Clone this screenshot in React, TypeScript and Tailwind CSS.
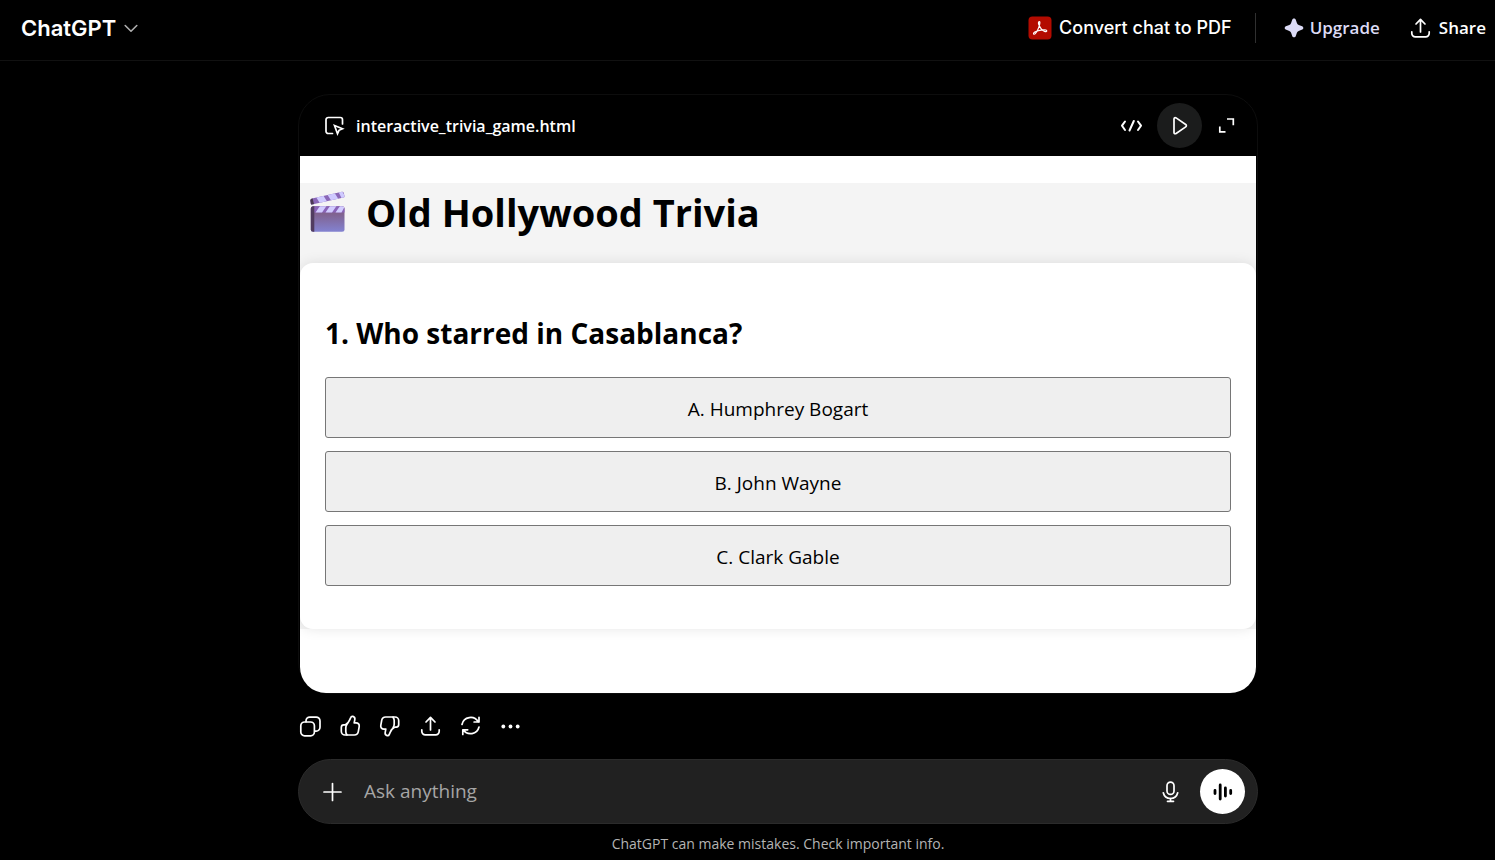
import React, { useState } from 'react';

const options = ['A. Humphrey Bogart', 'B. John Wayne', 'C. Clark Gable'];

interface IconProps {
  className?: string;
  children: React.ReactNode;
}

const Icon: React.FC<IconProps> = ({ className = 'size-6', children }) => (
  <svg
    viewBox="0 0 24 24"
    fill="none"
    stroke="currentColor"
    strokeWidth="1.7"
    strokeLinecap="round"
    strokeLinejoin="round"
    aria-hidden="true"
    className={`shrink-0 ${className}`}
  >
    {children}
  </svg>
);

const UploadIcon = () => (
  <Icon>
    <path d="M12.500 16V3.800M8 8l4.500-4.600L17 8" />
    <path d="M3.800 15.800v1.500a3.500 3.500 0 0 0 3.500 3.500h10.400a3.500 3.500 0 0 0 3.500-3.500v-1.500" />
  </Icon>
);

const ThumbIcon = ({ className }: { className?: string }) => (
  <Icon className={className}>
    <path d="M7.400 10.800c1.900-.9 3.400-2.700 4.300-4.900l1-2.300c.4-1 1.300-1.500 2.200-1.200 1.500.5 2.200 1.800 1.900 3.300l-.6 3.100h1.800c2.200 0 3.600 1.700 3.200 3.800l-.9 5c-.4 2.200-1.900 3.400-4 3.400H7a3.700 3.700 0 0 1-3.700-3.700v-3.900c0-1.500 1-2.600 2.400-2.600z" />
    <path d="M8.900 10.400c-.8 1-1.100 2.100-1.100 3.500v3.500c0 1.400.4 2.500 1.200 3.500" />
  </Icon>
);

const ClapperIcon = () => (
  <svg viewBox="0 0 36 41" className="h-[41px] w-9 shrink-0" role="img" aria-label="Clapper board">
    <defs>
      <linearGradient id="board" x1="0" y1="0" x2="0" y2="1">
        <stop offset="0.300" stopColor="#80628f" />
        <stop offset="1" stopColor="#8383d2" />
      </linearGradient>
      <clipPath id="arm">
        <path d="M2 7.500 32 .8a1.500 1.500 0 0 1 1.700 1l.8 3.300a1 1 0 0 1-.8 1.300L2 13.500a1 1 0 0 1-1.200-.8L.3 9.500a2 2 0 0 1 1.700-2z" />
      </clipPath>
      <clipPath id="slate">
        <rect x="0.800" y="15.200" width="33.700" height="25.500" rx="2.500" />
      </clipPath>
    </defs>
    <g clipPath="url(#arm)">
      <path fill="#8a67b7" d="M0 0h36v15H0z" />
      <path fill="#cfcaff" d="m6 6 7-2 5 8-7 2zM17 3l7-2 5 8-7 2zM28 0l4 0 4 7-4 1z" />
      <path fill="#4b3854" d="M0 7h2.500l2 8H0z" />
    </g>
    <g clipPath="url(#slate)">
      <path fill="url(#board)" d="M0 15h36v26H0z" />
      <path fill="#8a64b8" d="M4 15h32v6.500H4z" />
      <path fill="#d2ccff" d="M10 15h6.500l-4.500 6.500H5.500zM20 15h6.500L22 21.500h-6.500zM30 15h5l-3.500 6.500h-6z" />
      <path fill="#513c60" d="M0 15h4.300v26H0z" />
    </g>
  </svg>
);

const Header = () => (
  <header className="flex h-[61px] items-center justify-between border-b border-[#111] pr-[9px] pb-1 pl-[21px]">
    <button type="button" className="flex items-center gap-2 text-[22px] leading-7 font-semibold">
      ChatGPT
      <svg viewBox="0 0 14 14" fill="none" stroke="#afafaf" strokeWidth="1.600" strokeLinecap="round" strokeLinejoin="round" className="size-[14px]" aria-hidden="true">
        <path d="m1.200 4.500 5.800 5.700 5.800-5.700" />
      </svg>
    </button>

    <div className="flex items-center">
      <button type="button" className="flex items-center gap-[7px] text-lg font-medium">
        <svg viewBox="0 0 24 24" className="size-6" aria-hidden="true">
          <rect x="0.500" y="0.500" width="23" height="23" rx="4" fill="#b30b00" />
          <path
            d="M11.400 5.600c-1.300 0-1.100 1.800-.4 3.400 1.200 2.800 3.100 5.400 5.600 6.400 1.500.6 2.300 0 2.100-.7-.3-1-3-1.100-5.700-.6-2.300.4-4.900 1.100-6.200 1.900-1.300.9-1.600 1.900-1 2.200 1.100.5 2.900-2.200 4.100-4.700 1.500-3.100 2.600-7.900 1.500-7.900z"
            fill="none"
            stroke="#fff"
            strokeWidth="1.200"
          />
        </svg>
        Convert chat to PDF
      </button>
      <div className="mr-7 ml-[23px] h-[30px] w-px bg-[#303030]" />
      <button type="button" className="flex items-center gap-[6px] font-['Open_Sans',sans-serif] text-[17px] font-semibold text-[#dcdbf6]">
        <svg viewBox="0 0 20 20" fill="currentColor" className="size-5" aria-hidden="true">
          <path d="M8.300 1.600c.5-1.500 2.900-1.500 3.400 0l1.200 3.500c.3.900.9 1.500 1.800 1.800l3.500 1.300c1.500.5 1.500 2.900 0 3.400l-3.500 1.300c-.9.3-1.500.9-1.800 1.800l-1.200 3.500c-.5 1.500-2.900 1.500-3.400 0l-1.200-3.500c-.3-.9-.9-1.500-1.800-1.800l-3.500-1.300c-1.500-.5-1.500-2.900 0-3.400l3.500-1.300c.9-.3 1.500-.9 1.800-1.800z" />
        </svg>
        Upgrade
      </button>
      <button type="button" className="ml-7 flex items-center gap-[7px] font-['Open_Sans',sans-serif] text-[17px] font-semibold">
        <UploadIcon />
        Share
      </button>
    </div>
  </header>
);

const TriviaGame = () => {
  const [picked, setPicked] = useState<string | null>(null);

  return (
    <div className="overflow-hidden rounded-b-[26px] bg-white pt-[27px] pb-16 text-black">
      <div className="bg-[#f4f4f4]">
        <div className="flex h-20 items-start gap-5 pt-2 pl-[10px]">
          <ClapperIcon />
          <h1 className="text-[38px] leading-[42px] font-bold">Old Hollywood Trivia</h1>
        </div>
        <section className="rounded-[13px] bg-white px-[25px] pt-[50px] pb-[43px] shadow-[0_0_13px_rgba(0,0,0,0.1)]">
          <h2 className="text-[28px] leading-10 font-bold">1. Who starred in Casablanca?</h2>
          <div className="mt-6 flex flex-col gap-[13px]">
            {options.map((option) => (
              <button
                key={option}
                type="button"
                aria-pressed={picked === option}
                onClick={() => setPicked(option)}
                className="h-[61px] rounded-[3px] border border-[#767676] bg-[#efefef] pt-[3px] text-[19px]"
              >
                {option}
              </button>
            ))}
          </div>
        </section>
      </div>
    </div>
  );
};

const Canvas = () => (
  <article className="rounded-[32px] border border-[#0d0d0d] px-px">
    <div className="flex h-[61px] items-center justify-between pr-[17px] pl-[22px]">
      <div className="flex items-center gap-[10px]">
        <Icon>
          <path d="M10.500 19.500H6.200A2.200 2.200 0 0 1 4 17.300V5.700a2.200 2.200 0 0 1 2.200-2.200h12.100a2.200 2.200 0 0 1 2.200 2.200v4.300" />
          <path strokeLinejoin="miter" d="m12.500 11.500 8 3.300-3.500 1.500-1.500 3.500z" />
        </Icon>
        <span className="text-base font-semibold">interactive_trivia_game.html</span>
      </div>
      <div className="flex items-center">
        <button type="button" aria-label="Code">
          <Icon>
            <path strokeWidth="2" d="M5 7.500 2 11.700 5 16M18 7.500l3 4.200-3 4.300M13.800 7l-4.300 9.500" />
          </Icon>
        </button>
        <button type="button" aria-label="Preview" className="mx-[13px] flex size-[45px] items-center justify-center rounded-full bg-[#1b1c1c]">
          <Icon>
            <path d="M6 5v13.400c0 1.200 1.100 1.700 2.100 1.100l9.600-6.600c.9-.6.9-1.800 0-2.400L8.100 3.900C7.100 3.300 6 3.800 6 5z" />
          </Icon>
        </button>
        <button type="button" aria-label="Full screen">
          <Icon>
            <path strokeLinecap="butt" strokeLinejoin="miter" d="M12 5h6.300v6.300M4.800 12.500v5.300h5.700" />
          </Icon>
        </button>
      </div>
    </div>
    <TriviaGame />
  </article>
);

const Actions = () => (
  <div className="mt-5 flex gap-4">
    <button type="button" aria-label="Copy">
      <Icon>
        <rect x="2.800" y="8" width="13.600" height="13.800" rx="3.800" />
        <path d="M8 7.700V6.900a3.800 3.800 0 0 1 3.800-3.800h6.400a3.800 3.800 0 0 1 3.800 3.800v6.400a3.800 3.800 0 0 1-3.800 3.800h-1.500" />
      </Icon>
    </button>
    <button type="button" aria-label="Good response">
      <ThumbIcon />
    </button>
    <button type="button" aria-label="Bad response">
      <ThumbIcon className="size-6 rotate-180" />
    </button>
    <button type="button" aria-label="Share">
      <UploadIcon />
    </button>
    <button type="button" aria-label="Try again">
      <Icon>
        <path d="M4 10.500A8.700 8.700 0 0 1 20.200 8M21 3.300V8h-4.900M21 13A8.700 8.700 0 0 1 5.300 15.800M4.800 20.500v-4.700h4.900" />
      </Icon>
    </button>
    <button type="button" aria-label="More">
      <Icon>
        <g fill="currentColor" stroke="none">
          <circle cx="5.300" cy="12.500" r="1.900" />
          <circle cx="12.500" cy="12.500" r="1.900" />
          <circle cx="19.700" cy="12.500" r="1.900" />
        </g>
      </Icon>
    </button>
  </div>
);

const Composer = () => (
  <form
    onSubmit={(e) => e.preventDefault()}
    className="mt-[21px] flex h-[65px] items-center rounded-full border border-[#2b2b2b] bg-[#212121] pr-3 pl-[21px]"
  >
    <button type="button" aria-label="Add files">
      <Icon>
        <path d="M12.500 3.500v17M4 12h17" />
      </Icon>
    </button>
    <input
      type="text"
      aria-label="Ask anything"
      placeholder="Ask anything"
      className="mx-5 min-w-0 flex-1 bg-transparent text-[19px] outline-none placeholder:text-[#a6a6a6]"
    />
    <button type="button" aria-label="Dictate">
      <Icon>
        <rect x="9" y="2.200" width="7" height="12.200" rx="3.500" />
        <path d="M5.300 12.800a7.400 7.400 0 0 0 14.400 0M12.500 18.300v3M9.500 21.300h6" />
      </Icon>
    </button>
    <button type="button" aria-label="Voice mode" className="ml-[18px] flex size-[45px] items-center justify-center rounded-full bg-white text-black">
      <Icon>
        <path strokeWidth="2.800" d="M4 10.500v3M9.200 5v14M14.400 8v8M19.700 10.500v3" />
      </Icon>
    </button>
  </form>
);

export default function App() {
  return (
    <div className="flex min-h-screen flex-col bg-black font-['Inter',sans-serif] text-white">
      <Header />
      <main className="flex-1 pt-[33px] pl-[61px] font-['Open_Sans',sans-serif]">
        <div className="mx-auto max-w-[960px]">
          <Canvas />
          <Actions />
          <Composer />
          <p className="py-[10px] text-center text-sm text-[#b4b4b4]">
            ChatGPT can make mistakes. Check important info.
          </p>
        </div>
      </main>
    </div>
  );
}
